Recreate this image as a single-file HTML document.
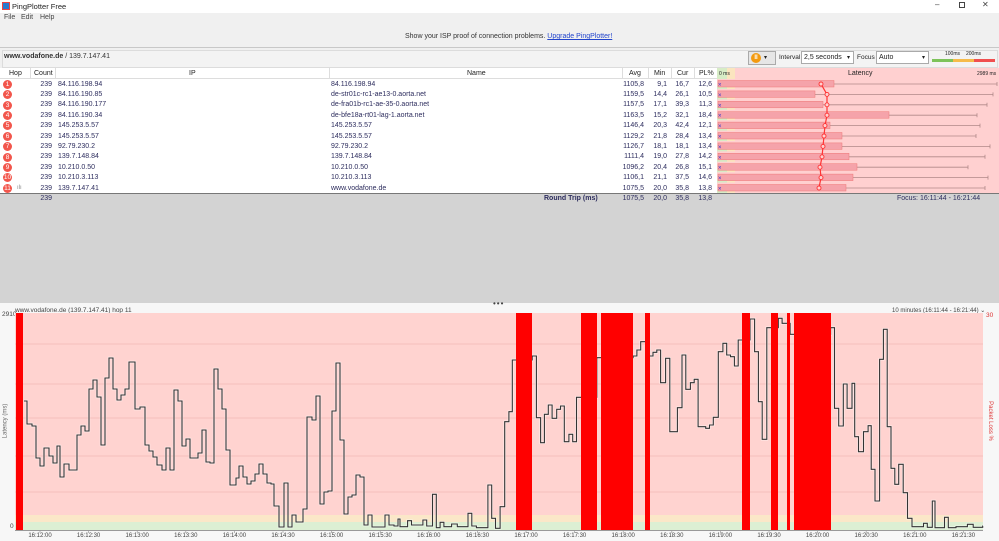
<!DOCTYPE html>
<html><head><meta charset="utf-8">
<style>
*{margin:0;padding:0;box-sizing:border-box}
body{width:999px;height:541px;overflow:hidden;background:#f0f0f0;font-family:"Liberation Sans",sans-serif;font-size:7px;color:#222;position:relative}
.a{position:absolute;white-space:nowrap}
.r{text-align:right}
.hop{position:absolute;left:3px;width:9px;height:9px;border-radius:50%;background:#f2564c;color:#fff;font-size:6.5px;text-align:center;line-height:9px}
.t{color:#2d2d5e}
</style></head><body>
<div class="a" style="left:0;top:0;width:999px;height:13px;background:#fff"></div>
<div class="a" style="left:2px;top:2px;width:8px;height:8px;background:#2a7ad0;border:1px solid #e44"></div>
<div class="a" style="left:12px;top:2px;font-size:7.5px">PingPlotter Free</div>
<div class="a" style="left:935px;top:0px;font-size:8px;color:#444">–</div>
<div class="a" style="left:959px;top:2px;width:6px;height:6px;border:1px solid #444"></div>
<div class="a" style="left:982px;top:0px;font-size:8px;color:#444">✕</div>
<div class="a" style="left:4px;top:14px;color:#444">File</div>
<div class="a" style="left:21px;top:14px;color:#444">Edit</div>
<div class="a" style="left:40px;top:14px;color:#444">Help</div>
<div class="a" style="left:0;top:47px;width:999px;height:1px;background:#c8c8c8"></div>
<div class="a" style="left:405px;top:33px;font-size:7px;color:#333">Show your ISP proof of connection problems. <span style="color:#2244cc;text-decoration:underline">Upgrade PingPlotter!</span></div>
<div class="a" style="left:2px;top:50px;width:996px;height:18px;background:#f3f3f3;border:1px solid #dcdcdc"></div>
<div class="a" style="left:4px;top:53px;font-size:7px;color:#333"><b>www.vodafone.de</b> / 139.7.147.41</div>
<div class="a" style="left:748px;top:51px;width:28px;height:14px;background:#e6e6e6;border:1px solid #aaa"></div>
<div class="a" style="left:751px;top:53px;width:10px;height:10px;border-radius:50%;background:#f39a10;color:#fff;font-size:6px;text-align:center;line-height:10px;font-weight:bold">II</div>
<div class="a" style="left:764px;top:54px;font-size:6px">▾</div>
<div class="a" style="left:779px;top:54px;font-size:6.5px">Interval</div>
<div class="a" style="left:801px;top:51px;width:53px;height:13px;background:#fff;border:1px solid #aaa;padding:2px 2px">2,5 seconds<span style="position:absolute;right:3px;font-size:6px">▾</span></div>
<div class="a" style="left:857px;top:54px;font-size:6.5px">Focus</div>
<div class="a" style="left:876px;top:51px;width:53px;height:13px;background:#fff;border:1px solid #aaa;padding:2px 2px">Auto<span style="position:absolute;right:3px;font-size:6px">▾</span></div>
<div class="a" style="left:945px;top:51px;font-size:5px">100ms</div><div class="a" style="left:966px;top:51px;font-size:5px">200ms</div>
<div class="a" style="left:932px;top:59px;width:21px;height:3px;background:#7dc35a"></div>
<div class="a" style="left:953px;top:59px;width:21px;height:3px;background:#f6bb4a"></div>
<div class="a" style="left:974px;top:59px;width:21px;height:3px;background:#f05050"></div>
<div class="a" style="left:0;top:68px;width:999px;height:126px;background:#fff"></div>
<div class="a" style="left:0;top:68px;width:999px;height:11px;background:#fff;border-bottom:1px solid #ddd"></div>
<div class="a" style="left:717px;top:68px;width:282px;height:126px;background:#ffd0d0"></div>
<div class="a" style="left:717px;top:68px;width:10px;height:11px;background:#d7ecc6"></div>
<div class="a" style="left:727px;top:68px;width:8px;height:11px;background:#fbe5bf"></div>
<div class="a" style="left:9px;top:70px">Hop</div>
<div class="a" style="left:30px;top:68px;width:1px;height:11px;background:#ddd"></div>
<div class="a" style="left:34px;top:70px">Count</div>
<div class="a" style="left:55px;top:68px;width:1px;height:11px;background:#ddd"></div>
<div class="a" style="left:189px;top:70px">IP</div>
<div class="a" style="left:329px;top:68px;width:1px;height:11px;background:#ddd"></div>
<div class="a" style="left:467px;top:70px">Name</div>
<div class="a" style="left:622px;top:68px;width:1px;height:11px;background:#ddd"></div>
<div class="a" style="left:629px;top:70px">Avg</div>
<div class="a" style="left:648px;top:68px;width:1px;height:11px;background:#ddd"></div>
<div class="a" style="left:654px;top:70px">Min</div>
<div class="a" style="left:671px;top:68px;width:1px;height:11px;background:#ddd"></div>
<div class="a" style="left:677px;top:70px">Cur</div>
<div class="a" style="left:694px;top:68px;width:1px;height:11px;background:#ddd"></div>
<div class="a" style="left:699px;top:70px">PL%</div>
<div class="a" style="left:719px;top:71px;font-size:5px">0 ms</div>
<div class="a" style="left:848px;top:70px">Latency</div>
<div class="a" style="left:977px;top:71px;font-size:5px">2989 ms</div>
<div id="rows"></div>
<svg class="a" style="left:0;top:0" width="999" height="541" id="tsvg"></svg>
<div class="a" style="left:0;top:193px;width:999px;height:1px;background:#777"></div>
<div class="a" style="left:0;top:194px;width:999px;height:109px;background:#d3d3d3"></div>
<div class="a t r" style="left:30px;top:195px;width:22px">239</div>
<div class="a t" style="left:544px;top:195px"><b>Round Trip (ms)</b></div>
<div class="a t r" style="left:610px;top:195px;width:34px">1075,5</div>
<div class="a t r" style="left:640px;top:195px;width:27px">20,0</div>
<div class="a t r" style="left:660px;top:195px;width:29px">35,8</div>
<div class="a t r" style="left:685px;top:195px;width:27px">13,8</div>
<div class="a" style="left:897px;top:195px;color:#2d2d5e">Focus: 16:11:44 - 16:21:44</div>
<div class="a" style="left:0;top:303px;width:999px;height:238px;background:#f7f7f7"></div>
<div class="a" style="left:493px;top:299px;font-size:8px;color:#444;letter-spacing:1px">•••</div>
<div class="a" style="left:15px;top:307px;font-size:6.5px;color:#444">www.vodafone.de (139.7.147.41) hop 11</div>
<div class="a" style="left:892px;top:307px;font-size:6px;color:#444">10 minutes (16:11:44 - 16:21:44) ⌄</div>
<div class="a" style="left:2px;top:311px;font-size:6.5px;color:#444">2910</div>
<div class="a" style="left:10px;top:523px;font-size:6.5px;color:#444">0</div>
<div class="a" style="left:986px;top:312px;font-size:6.5px;color:#d33">30</div>
<div class="a" style="left:-12px;top:418px;font-size:6px;color:#666;transform:rotate(-90deg)">Latency (ms)</div>
<div class="a" style="left:970px;top:418px;font-size:6px;color:#d33;transform:rotate(90deg)">Packet Loss %</div>
<svg class="a" style="left:0;top:0" width="999" height="541" id="csvg"></svg>
<script>
var NS="http://www.w3.org/2000/svg";
function el(p,t,a){var e=document.createElementNS(NS,t);for(var k in a)e.setAttribute(k,a[k]);p.appendChild(e);return e;}
var rows=[["84.116.198.94","84.116.198.94","1105,8","9,1","16,7","12,6",834,821,997],
["84.116.190.85","de-str01c-rc1-ae13-0.aorta.net","1159,5","14,4","26,1","10,5",815,827,993],
["84.116.190.177","de-fra01b-rc1-ae-35-0.aorta.net","1157,5","17,1","39,3","11,3",823,827,987],
["84.116.190.34","de-bfe18a-rt01-lag-1.aorta.net","1163,5","15,2","32,1","18,4",889,827,977],
["145.253.5.57","145.253.5.57","1146,4","20,3","42,4","12,1",830,825,980],
["145.253.5.57","145.253.5.57","1129,2","21,8","28,4","13,4",842,824,976],
["92.79.230.2","92.79.230.2","1126,7","18,1","18,1","13,4",842,823,990],
["139.7.148.84","139.7.148.84","1111,4","19,0","27,8","14,2",849,822,985],
["10.210.0.50","10.210.0.50","1096,2","20,4","26,8","15,1",857,820,968],
["10.210.3.113","10.210.3.113","1106,1","21,1","37,5","14,6",853,821,988],
["139.7.147.41","www.vodafone.de","1075,5","20,0","35,8","13,8",846,819,985]];
var h="",ts=document.getElementById("tsvg"),pts=[];
rows.forEach(function(r,i){var y=79+i*10.4;var ty=y+1.5;
h+='<div class="hop" style="top:'+(y+0.7)+'px">'+(i+1)+'</div>';
if(i==10)h+='<div class="a" style="left:17px;top:'+ty+'px;color:#888;font-size:6px">ılı</div>';
h+='<div class="a t r" style="left:30px;top:'+ty+'px;width:22px">239</div>';
h+='<div class="a t" style="left:58px;top:'+ty+'px">'+r[0]+'</div>';
h+='<div class="a t" style="left:331px;top:'+ty+'px">'+r[1]+'</div>';
h+='<div class="a t r" style="left:610px;top:'+ty+'px;width:34px">'+r[2]+'</div>';
h+='<div class="a t r" style="left:640px;top:'+ty+'px;width:27px">'+r[3]+'</div>';
h+='<div class="a t r" style="left:660px;top:'+ty+'px;width:29px">'+r[4]+'</div>';
h+='<div class="a t r" style="left:685px;top:'+ty+'px;width:27px">'+r[5]+'</div>';
el(ts,"rect",{x:717,y:y+7,width:10,height:3,fill:"#d7ecc6"});
el(ts,"rect",{x:727,y:y+7,width:8,height:3,fill:"#fbe5bf"});
el(ts,"line",{x1:r[6],y1:y+5,x2:r[8],y2:y+5,stroke:"#b08888","stroke-width":0.8});
el(ts,"line",{x1:r[8],y1:y+3,x2:r[8],y2:y+7,stroke:"#b08888","stroke-width":0.8});
el(ts,"rect",{x:718,y:y+1.5,width:r[6]-718,height:6.5,fill:"#f5a3aa",stroke:"#e77",'stroke-width':0.5});
el(ts,"text",{x:718,y:y+7.5,"font-size":6,fill:"#33c","font-family":"Liberation Sans"}).textContent="×";
pts.push([r[7],y+5]);});
document.getElementById("rows").innerHTML=h;
el(ts,"polyline",{points:pts.map(function(p){return p.join(",")}).join(" "),fill:"none",stroke:"#f33","stroke-width":1.2});
pts.forEach(function(p){el(ts,"circle",{cx:p[0],cy:p[1],r:2,fill:"#ffd0d0",stroke:"#f33","stroke-width":0.9});});
var c=document.getElementById("csvg");
el(c,"rect",{x:15,y:313,width:968,height:217,fill:"#ffd3d0"});
el(c,"rect",{x:15,y:515,width:968,height:7,fill:"#fbe7c8"});
el(c,"rect",{x:15,y:522,width:968,height:8,fill:"#dcefd3"});
[344,384,418,456,492].forEach(function(y){el(c,"line",{x1:15,y1:y,x2:983,y2:y,stroke:"#f0b8b5","stroke-width":0.7});});
el(c,"line",{x1:15,y1:530.5,x2:983,y2:530.5,stroke:"#999","stroke-width":1});
var L=[[24,401],[27,424],[32,426],[36,458],[40,466],[44,448],[49,456],[53,463],[57,446],[60,477],[64,464],[69,470],[77,435],[81,426],[85,431],[89,389],[93,380],[97,397],[101,445],[105,378],[109,358],[113,389],[117,400],[121,395],[125,389],[129,362],[135,409],[140,407],[145,445],[149,451],[153,457],[157,465],[162,470],[166,448],[170,470],[174,390],[178,401],[182,446],[186,439],[190,458],[198,453],[202,430],[206,462],[210,463],[214,369],[218,389],[222,409],[226,450],[230,485],[236,478],[239,466],[243,477],[247,484],[251,481],[255,474],[259,464],[263,474],[267,483],[271,484],[274,506],[279,527],[284,483],[288,527],[292,515],[296,522],[303,509],[307,417],[312,420],[316,396],[320,504],[324,492],[328,491],[332,411],[336,363],[340,440],[344,514],[348,497],[352,495],[356,475],[360,477],[364,525],[368,515],[372,527],[385,515],[389,525],[394,526],[398,519]];
var R=[[0,680],[20,662],[30,675],[60,660],[70,678],[85,583],[95,683],[105,667],[115,680],[135,672],[150,680],[178,640],[188,678],[200,683],[230,555],[240,655],[250,685],[262,620],[274,365],[285,335],[294,180],[346,168],[357,353],[368,428],[378,343],[388,315],[398,355],[410,328],[420,318],[430,425],[442,403],[452,425],[462,292],[473,292],[515,173],[610,168],[620,150],[630,125],[653,168],[662,157],[672,150],[682,248],[695,175],[706,395],[726,323],[738,165],[748,268],[760,248],[770,238],[780,380],[800,385],[810,375],[820,352],[833,155],[845,130],[855,165],[865,170],[875,198],[885,120],[916,57],[928,155],[938,305],[948,418],[960,83],[990,55],[1000,70],[1021,103],[1127,83],[1137,325],[1148,378],[1160,252],[1170,325],[1183,250],[1190,410],[1200,455],[1213,395],[1225,377],[1233,508],[1243,603],[1255,178],[1265,88],[1275,380],[1285,505],[1295,553],[1305,493],[1317,578],[1328,655],[1340,680],[1370,670],[1380,682],[1393,603],[1400,683],[1425,652],[1435,683],[1455,680],[1485,673],[1500,682],[1525,678]];
R.forEach(function(p){L.push([400+p[0]/2.617,300+p[1]/3]);});
var d="M"+L[0][0]+" "+L[0][1];
for(var i=1;i<L.length;i++)d+=" H"+L[i][0].toFixed(1)+" V"+L[i][1].toFixed(1);
d+=" H983";
el(c,"path",{d:d,fill:"none",stroke:"#fff","stroke-width":2.4,opacity:0.6});
el(c,"path",{d:d,fill:"none",stroke:"#333","stroke-width":1.1});
[[16,23],[516,532],[581,597],[601,633],[645,650],[742,750],[771,778],[787,790],[794,831]].forEach(function(b){el(c,"rect",{x:b[0],y:313,width:b[1]-b[0],height:217,fill:"#ff0000"});});
var lab=["16:12:00","16:12:30","16:13:00","16:13:30","16:14:00","16:14:30","16:15:00","16:15:30","16:16:00","16:16:30","16:17:00","16:17:30","16:18:00","16:18:30","16:19:00","16:19:30","16:20:00","16:20:30","16:21:00","16:21:30"];
lab.forEach(function(t,i){var x=40+i*48.6;el(c,"line",{x1:x,y1:530,x2:x,y2:533,stroke:"#999","stroke-width":0.7});
el(c,"text",{x:x,y:537,"font-size":6,fill:"#444","text-anchor":"middle","font-family":"Liberation Sans"}).textContent=t;});
</script>
</body></html>
